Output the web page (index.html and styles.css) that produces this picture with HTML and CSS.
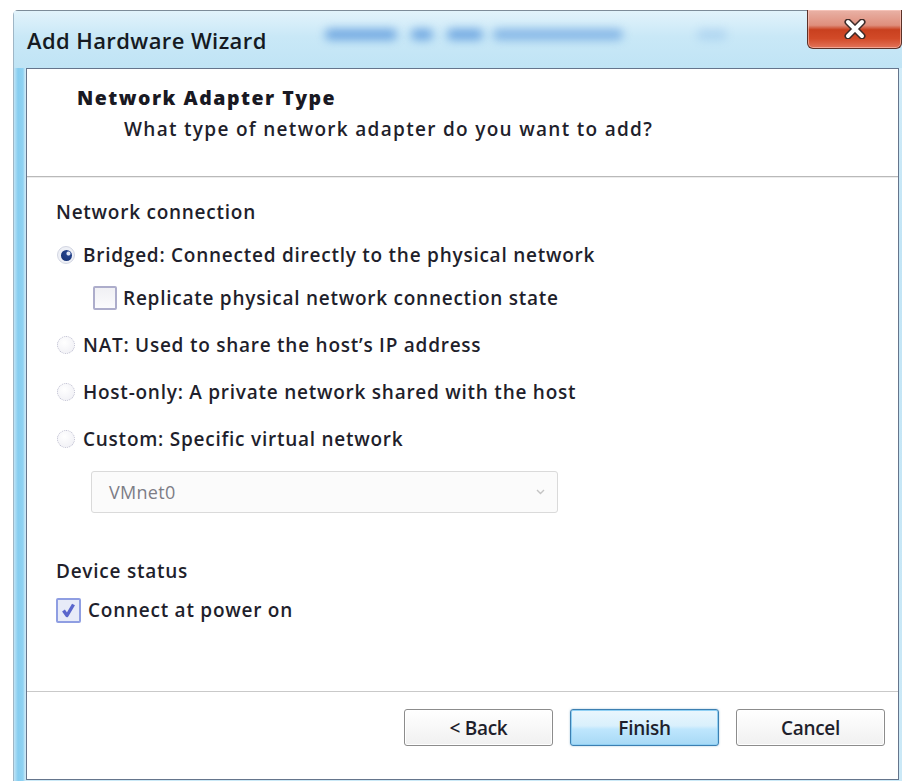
FILE: index.html
```html
<!DOCTYPE html>
<html lang="en">
<head>
<meta charset="utf-8">
<title>Add Hardware Wizard</title>
<link rel="stylesheet" href="styles.css">
</head>
<body>
<div class="window">
  <div class="titlebar">
    <span class="title">Add Hardware Wizard</span>
    <span class="glass">
      <span class="smudge s1"></span>
      <span class="smudge s2"></span>
      <span class="smudge s3"></span>
      <span class="smudge s4"></span>
      <span class="smudge s5"></span>
    </span>
    <button class="close" type="button" aria-label="Close">
      <svg width="26" height="20" viewBox="0 0 26 20">
        <path d="M6 3 L20 17 M20 3 L6 17" stroke="#3b2a28" stroke-width="7" stroke-linecap="round" fill="none"/>
        <path d="M6 3 L20 17 M20 3 L6 17" stroke="#ffffff" stroke-width="4" stroke-linecap="round" fill="none"/>
      </svg>
    </button>
  </div>

  <div class="panel">
    <header class="page-head">
      <h1>Network Adapter Type</h1>
      <p>What type of network adapter do you want to add?</p>
    </header>

    <main class="page-body">
      <div class="group-label">Network connection</div>

      <label class="option">
        <span class="radio checked"><span class="dot"></span></span>
        <span>Bridged: Connected directly to the physical network</span>
      </label>
      <label class="option sub">
        <span class="check"></span>
        <span>Replicate physical network connection state</span>
      </label>
      <label class="option spaced">
        <span class="radio"></span>
        <span>NAT: Used to share the host’s IP address</span>
      </label>
      <label class="option spaced">
        <span class="radio"></span>
        <span>Host-only: A private network shared with the host</span>
      </label>
      <label class="option spaced">
        <span class="radio"></span>
        <span>Custom: Specific virtual network</span>
      </label>

      <div class="select disabled">
        <span>VMnet0</span>
        <svg width="9" height="6" viewBox="0 0 9 6"><path d="M1 1 L4.5 4.5 L8 1" stroke="#c4c4c4" stroke-width="1.4" fill="none"/></svg>
      </div>

      <div class="group-label status">Device status</div>
      <label class="option power">
        <span class="check checked">
          <svg width="17" height="17" viewBox="0 0 17 17"><path d="M3.5 8.5 L7 13.5 L13.5 2.5" stroke="#5a66cc" stroke-width="3.4" fill="none" stroke-linejoin="round"/></svg>
        </span>
        <span>Connect at power on</span>
      </label>
    </main>

    <footer class="page-foot">
      <button class="btn" type="button">&lt; Back</button>
      <button class="btn primary" type="button">Finish</button>
      <button class="btn" type="button">Cancel</button>
    </footer>
  </div>
</div>
</body>
</html>
```

FILE: styles.css
```css
html, body {
  margin: 0;
  padding: 0;
  overflow: hidden;
  background: #ffffff;
}

body {
  font-family: "Open Sans", "Noto Sans", sans-serif;
  color: #1f1f2c;
}

/* window frame with glass border */
.window {
  margin: 10px 0 0 13px;
  width: 889px;
  height: 771px;
  box-sizing: border-box;
  padding: 0 3px 1px 12px;
  display: flex;
  flex-direction: column;
  border-top: 1px solid #7d8c99;
  border-left: 1px solid #9fb6c6;
  border-top-left-radius: 5px;
  background:
    linear-gradient(90deg, #bfe3f5 0px, #86cdf0 4px, #8fd2f2 9px, #c6e7f6 11px, transparent 12px),
    linear-gradient(180deg, #d6eef9 0%, #c2e5f6 30%, #cbe9f7 100%);
}

.titlebar {
  height: 57px;
  flex: none;
  display: flex;
  align-items: flex-start;
  margin-left: -12px;
  margin-right: -3px;
  background: linear-gradient(180deg, #e2f3fb 0%, #c9e8f7 45%, #c0e4f5 100%);
}

.title {
  font-size: 22px;
  line-height: 30px;
  font-weight: 600;
  margin: 14px 0 0 13px;
  color: #151a22;
  letter-spacing: 0.4px;
}

/* blurred shapes behind the glass */
.glass {
  flex: 1;
  position: relative;
  height: 57px;
}
.smudge {
  position: absolute;
  top: 18px;
  height: 11px;
  border-radius: 5px;
  background: #4a8cd8;
  filter: blur(5px);
  opacity: 0.7;
}
.s1 { left: 58px; width: 72px; }
.s2 { left: 144px; width: 22px; }
.s3 { left: 180px; width: 36px; }
.s4 { left: 226px; width: 130px; opacity: 0.55; }
.s5 { left: 430px; width: 30px; opacity: 0.2; }

.close {
  flex: none;
  width: 95px;
  height: 39px;
  margin-top: -1px;
  padding: 0;
  border: 1px solid #5b3128;
  border-top: none;
  border-radius: 0 0 6px 6px;
  background: linear-gradient(180deg, #e9b2a6 0%, #df8f7d 40%, #c9401f 52%, #d24a28 75%, #e2745a 100%);
  box-shadow: inset 0 0 0 1px rgba(255, 210, 200, 0.55);
  display: flex;
  align-items: center;
  justify-content: center;
}

/* white client area */
.panel {
  flex: 1;
  display: flex;
  flex-direction: column;
  background: #ffffff;
  border: 1px solid #65758c;
}

.page-head {
  height: 107px;
  flex: none;
  border-bottom: 1px solid #b9b9b9;
  box-shadow: 0 1px 0 #ececec;
  box-sizing: content-box;
}

.page-head h1 {
  margin: 0;
  padding: 17px 0 0 50px;
  font-size: 19.5px;
  line-height: 24px;
  font-weight: 800;
  color: #191923;
  letter-spacing: 1.5px;
}

.page-head p {
  margin: 7px 0 0 97px;
  font-size: 19px;
  line-height: 24px;
  font-weight: 600;
  letter-spacing: 1.3px;
}

.page-body {
  flex: 1;
  padding: 22px 0 0 29px;
  font-size: 19px;
  font-weight: 600;
  letter-spacing: 0.75px;
}

.group-label {
  height: 26px;
  line-height: 26px;
}
.group-label.status {
  margin-top: 45px;
}

.option {
  display: flex;
  align-items: center;
  height: 26px;
  line-height: 26px;
  margin-top: 17px;
  white-space: nowrap;
}
.option.spaced {
  margin-top: 21px;
}
.option.sub {
  margin-left: 37px;
}
.option.power {
  margin-top: 13px;
}

.radio {
  width: 18px;
  height: 18px;
  box-sizing: border-box;
  margin: 0 8px 0 1px;
  border-radius: 50%;
  border: 1px dotted #bcbccf;
  background: radial-gradient(circle at 40% 35%, #ffffff 0%, #f3f3f7 70%, #e4e4ec 100%);
  display: flex;
  align-items: center;
  justify-content: center;
  flex: none;
}
.radio.checked {
  border: 1px solid #d3d6e2;
  background: #eef0f6;
}
.radio .dot {
  width: 11px;
  height: 11px;
  border-radius: 50%;
  background: radial-gradient(circle at 68% 32%, #dfe6f5 0 1.5px, #22418a 2.5px, #15306f 100%);
}

.check {
  width: 24px;
  height: 24px;
  box-sizing: border-box;
  margin-right: 6px;
  border: 2px solid #adadcb;
  border-radius: 2px;
  background: linear-gradient(180deg, #f0f0f4 0%, #fbfbfd 100%);
  display: flex;
  align-items: center;
  justify-content: center;
  flex: none;
}
.check.checked {
  width: 25px;
  height: 25px;
  margin-right: 7px;
  border-color: #8f9ee2;
  background: #e7ebf8;
}

.select {
  margin: 19px 0 0 35px;
  width: 467px;
  height: 42px;
  box-sizing: border-box;
  border: 1px solid #dadada;
  border-radius: 3px;
  background: #fbfbfb;
  display: flex;
  align-items: center;
  justify-content: space-between;
  padding: 0 12px 0 17px;
  color: #7d7d86;
  font-size: 18px;
  font-weight: 400;
  letter-spacing: 0.3px;
}

.page-foot {
  height: 70px;
  flex: none;
  border-top: 1px solid #c9c9c9;
  display: flex;
  justify-content: flex-end;
  align-items: flex-start;
  gap: 17px;
  padding: 17px 13px 0 0;
  box-sizing: content-box;
}

.btn {
  width: 149px;
  height: 37px;
  font-family: inherit;
  font-size: 19px;
  font-weight: 600;
  color: #1f1f2c;
  border: 1px solid #8c8c8c;
  border-radius: 3px;
  background: linear-gradient(180deg, #ffffff 0%, #f8f8f8 50%, #f0f0f0 100%);
  box-shadow: inset 0 0 0 1px #ffffff;
  letter-spacing: -0.3px;
  padding: 0;
}
.btn.primary {
  border: 1px solid #3c7fb1;
  background: linear-gradient(180deg, #eaf6fd 0%, #d9f0fc 45%, #bee6fd 55%, #a7d9f5 100%);
  box-shadow: inset 0 0 0 1px #8fd0f4, 0 0 2px rgba(60, 127, 177, 0.5);
}
```
